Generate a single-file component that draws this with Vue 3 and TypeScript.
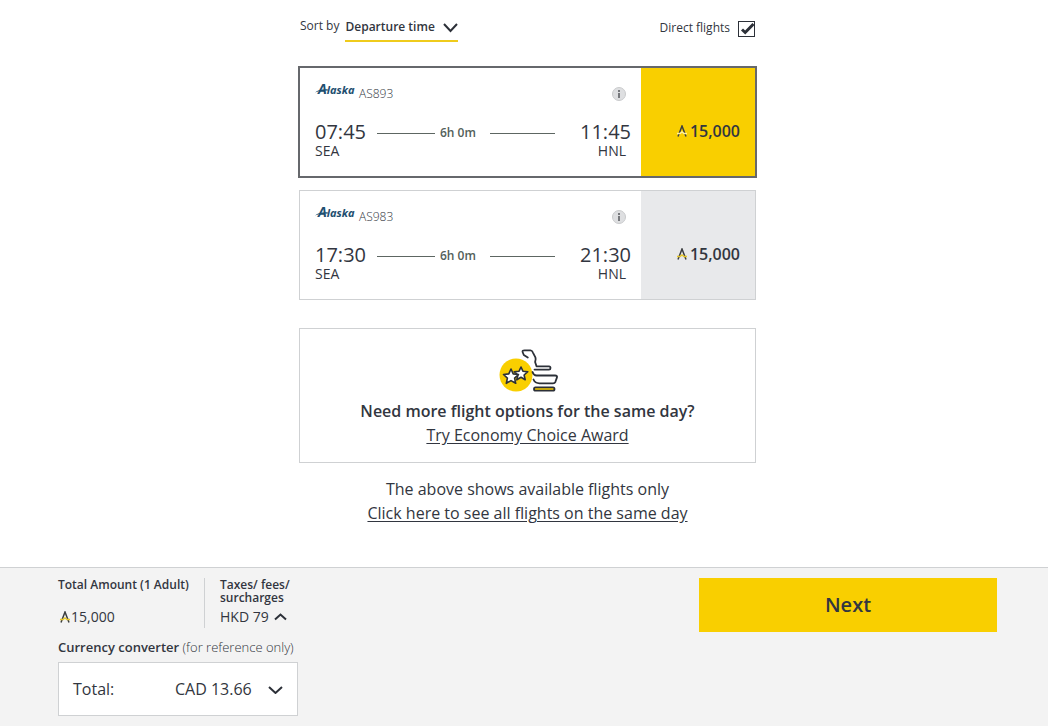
<script setup lang="ts">
import { ref } from 'vue'

interface Flight {
  code: string
  depart: string
  from: string
  arrive: string
  to: string
  duration: string
  points: string
}

const flights: Flight[] = [
  { code: 'AS893', depart: '07:45', from: 'SEA', arrive: '11:45', to: 'HNL', duration: '6h 0m', points: '15,000' },
  { code: 'AS983', depart: '17:30', from: 'SEA', arrive: '21:30', to: 'HNL', duration: '6h 0m', points: '15,000' },
]

const selected = ref('AS893')
const directOnly = ref(true)
const sortBy = ref('departure')
const currency = ref('CAD')
</script>

<template>
  <div class="page">
    <main class="results">
      <div class="toolbar">
        <div class="sort">
          <label for="sort">Sort by</label>
          <div class="sort-field">
            <select id="sort" v-model="sortBy">
              <option value="departure">Departure time</option>
            </select>
            <svg class="chevron" width="15" height="10" viewBox="0 0 15 10"><path d="M1 1l6.500 7L14 1" /></svg>
          </div>
        </div>
        <div class="direct">
          <label for="direct">Direct flights</label>
          <span class="tick">
            <input id="direct" v-model="directOnly" type="checkbox" />
            <svg v-if="directOnly" width="17" height="16" viewBox="0 0 17 16"><path d="M4 8.500l3.200 3L15.500 3" /></svg>
          </span>
        </div>
      </div>

      <article v-for="f in flights" :key="f.code" class="flight" :class="{ chosen: f.code === selected }">
        <div class="details">
          <div class="carrier">
            <svg class="airline" width="40" height="16" viewBox="0 0 40 16" role="img" aria-label="Alaska">
              <path d="M0 10.500C3 8 8 6.800 13 7.400L12.600 8.800C8 8 4 9 0 10.500z" />
              <text x="3" y="12"><tspan class="initial">A</tspan>laska</text>
            </svg>
            <span class="code">{{ f.code }}</span>
            <button class="info" type="button" aria-label="Flight information">
              <svg width="14" height="14" viewBox="0 0 14 14">
                <circle cx="7" cy="7" r="6.500" />
                <path d="M7 3v2M7 6v5" />
              </svg>
            </button>
          </div>
          <div class="route">
            <div class="stop">
              <span class="time">{{ f.depart }}</span>
              <span class="port">{{ f.from }}</span>
            </div>
            <div class="duration">
              <i class="rule"></i>
              <span>{{ f.duration }}</span>
              <i class="rule"></i>
            </div>
            <div class="stop arrival">
              <span class="time">{{ f.arrive }}</span>
              <span class="port">{{ f.to }}</span>
            </div>
          </div>
        </div>
        <button class="price" type="button" @click="selected = f.code">
          <svg class="miles" width="12" height="12" viewBox="0 0 12 12"><path class="legs" d="M2 11.500L6 1l4 10.500" /><path class="bar" d="M1 8.500h3L6 7l2 1.500h3" /></svg>
          <span>{{ f.points }}</span>
        </button>
      </article>

      <section class="promo">
        <svg width="60" height="44" viewBox="-1 0 60 44" fill="none">
          <circle cx="17" cy="26" r="16.500" fill="#f9cf00" />
          <g fill="#fff" stroke="#2c3038" stroke-width="1.600" stroke-linejoin="round">
            <path d="M22 18l1.900 4.200 4.900.5-3.700 3.300 1.100 4.800-4.200-2.500-4.200 2.500 1.100-4.800-3.700-3.300 4.900-.5z" />
            <path d="M12 20l2.200 4.900 5.300.6-3.900 3.600 1.100 5.200-4.700-2.700-4.700 2.700 1.100-5.200-3.900-3.600 5.300-.6z" />
          </g>
          <g stroke="#2c3038" stroke-width="1.800" stroke-linecap="round" stroke-linejoin="round">
            <path d="M28.800 8.500L24.800 6 23.600 3c-.4-1.200.4-1.700 1.900-1.700h6c1.200 0 1.800.7 2.300 2l2.600 5c.7 1.700.2 3-.3 4.700l1.400 4.300H50c2 0 2 3.300 0 3.300H35.500" />
            <path d="M33.500 23c.8 2.600 2 3.500 4 3.500h18.500c1.800 0 2.400.8 1.800 2.400l-1.400 3.900c-.5 1.200-1.200 1.500-2.400 1.500H40.500c-3 0-4.800-.8-6-3.800" />
            <path d="M36.500 38.300h17.500c2 0 2 3.400 0 3.400H36.500c-2 0-2-3.400 0-3.400z" fill="#f9cf00" />
          </g>
        </svg>
        <h2>Need more flight options for the same day?</h2>
        <a href="#choice">Try Economy Choice Award</a>
      </section>

      <div class="note">
        <p>The above shows available flights only</p>
        <a href="#all">Click here to see all flights on the same day</a>
      </div>
    </main>

    <footer class="summary">
      <div class="totals">
        <div class="amounts">
          <div class="amount">
            <h3>Total Amount (1 Adult)</h3>
            <p class="sum">
              <svg class="miles" width="12" height="12" viewBox="0 0 12 12"><path class="legs" d="M2 11.500L6 1l4 10.500" /><path class="bar" d="M1 8.500h3L6 7l2 1.500h3" /></svg>
              <span>15,000</span>
            </p>
          </div>
          <div class="taxes">
            <h3>Taxes/ fees/ surcharges</h3>
            <button class="sum" type="button">
              <span>HKD 79</span>
              <svg class="chevron" width="13" height="8" viewBox="0 0 13 8"><path d="M1 6.500l5.500-5 5.500 5" /></svg>
            </button>
          </div>
        </div>
        <p class="converter-title"><strong>Currency converter</strong> (for reference only)</p>
        <div class="converter">
          <label for="currency">Total:</label>
          <select id="currency" v-model="currency">
            <option value="CAD">CAD 13.66</option>
          </select>
          <svg class="chevron" width="15" height="9" viewBox="0 0 15 9"><path d="M1 2l6.500 6L14 2" /></svg>
        </div>
      </div>
      <button class="next" type="button">Next</button>
    </footer>
  </div>
</template>

<style>
body {
  margin: 0;
  background: #fff;
}
</style>

<style scoped>
.page {
  display: flex;
  flex-direction: column;
  min-height: 100vh;
  font-family: 'Open Sans', 'Noto Sans', sans-serif;
  font-size: 16px;
  line-height: 24px;
  color: #323640;
}
.page * {
  box-sizing: border-box;
}
h2,
h3,
p {
  margin: 0;
  font-size: inherit;
  font-weight: 600;
}
p {
  font-weight: 400;
}
a {
  color: inherit;
  text-underline-offset: 2px;
}
button,
select {
  appearance: none;
  margin: 0;
  padding: 0;
  border: 0;
  border-radius: 0;
  background: none;
  color: inherit;
  font: inherit;
  cursor: pointer;
}
.chevron {
  flex: none;
  fill: none;
  stroke: #2c3038;
  stroke-width: 2;
  pointer-events: none;
}
.results {
  flex: 1;
  width: 100%;
  max-width: 464px;
  margin: 0 auto;
  padding: 12px 0 0 7px;
}
.toolbar {
  display: flex;
  justify-content: space-between;
  height: 55px;
  font-size: 12px;
}
.sort {
  display: flex;
  gap: 6px;
  padding-left: 1px;
  line-height: 28px;
}
.sort-field {
  display: flex;
  align-items: center;
  width: 113px;
  height: 30px;
  border-bottom: 2px solid #efcb1c;
}
.sort-field select {
  flex: 1;
  height: 30px;
  margin-right: -15px;
  padding: 2px 15px 0 0;
  font-weight: 600;
}
.sort-field .chevron {
  margin-top: 4px;
}
.direct {
  display: flex;
  align-items: center;
  gap: 8px;
  height: 34px;
}
.direct label {
  line-height: 18px;
  padding-bottom: 2px;
}
.tick {
  display: grid;
  margin-right: 1px;
}
.tick input,
.tick svg {
  grid-area: 1 / 1;
}
.tick input {
  appearance: none;
  width: 17px;
  height: 16px;
  margin: 0;
  border: 1px solid #2c3038;
}
.tick svg {
  fill: none;
  stroke: #2c3038;
  stroke-width: 3;
  pointer-events: none;
}
.flight {
  display: flex;
  height: 110px;
  margin-bottom: 13px;
  border: 1px solid #cfd1d3;
}
.flight.chosen {
  border-color: #66686c;
  outline: 1px solid #66686c;
}
.details {
  flex: 1;
  padding: 14px 10px 0 15px;
}
.carrier {
  display: flex;
  align-items: center;
  gap: 4px;
  height: 24px;
}
.airline {
  flex: none;
  margin-bottom: 8px;
}
.airline path {
  fill: #1f4f70;
}
.airline text {
  fill: #1f4f70;
  font: italic 700 11px 'Noto Sans', sans-serif;
}
.airline .initial {
  font-size: 14px;
}
.code {
  font-size: 12px;
  font-weight: 300;
}
.info {
  height: 14px;
  margin-left: auto;
  margin-right: 5px;
  line-height: 0;
}
.info circle {
  fill: #dedfe1;
  stroke: #c9cacc;
}
.info path {
  fill: none;
  stroke: #77797d;
  stroke-width: 2;
}
.route {
  display: flex;
  justify-content: space-between;
}
.stop {
  display: flex;
  flex-direction: column;
  padding-top: 15px;
}
.time {
  font-size: 20px;
  line-height: 22px;
}
.port {
  font-size: 14px;
  line-height: 16px;
}
.arrival .port {
  padding-right: 5px;
  text-align: right;
}
.duration {
  display: flex;
  align-items: center;
  flex: 1;
  height: 24px;
  margin: 15px 25px 0 11px;
  font-size: 12px;
  font-weight: 600;
  color: #53605a;
}
.duration span {
  margin: 0 14px 0 5px;
}
.rule {
  flex: 1;
  height: 1px;
  background: #5d6662;
}
.rule:first-child {
  flex: 0 0 58px;
}
.price {
  display: flex;
  align-items: center;
  justify-content: flex-end;
  gap: 2px;
  width: 114px;
  padding: 18px 15px 0 0;
  background: #e8e9eb;
  font-weight: 600;
}
.chosen .price {
  background: #f9cf00;
}
.miles {
  flex: none;
  fill: none;
  stroke-width: 1.5;
}
.legs {
  stroke: #3b3e40;
}
.bar {
  stroke: #e6c72b;
}
.chosen .bar {
  stroke: #fff0a0;
}
.promo {
  display: flex;
  flex-direction: column;
  align-items: center;
  height: 135px;
  margin-top: 28px;
  padding-top: 20px;
  border: 1px solid #cfd1d3;
}
.promo svg {
  margin-bottom: 6px;
}
.note {
  padding: 14px 0 20px;
  text-align: center;
}
.summary {
  display: flex;
  justify-content: space-between;
  align-items: flex-start;
  padding: 10px 51px 10px 58px;
  border-top: 1px solid #cfd1d3;
  background: #f3f3f3;
}
.totals {
  width: 240px;
  font-size: 13px;
}
.amounts {
  display: flex;
  height: 50px;
}
.amount,
.taxes {
  display: flex;
  flex-direction: column;
  justify-content: space-between;
}
.amount {
  width: 147px;
  border-right: 1px solid #cfd1d3;
}
.taxes {
  flex: 1;
  padding-left: 15px;
}
h3 {
  font-size: 12px;
  line-height: 13px;
}
.sum {
  display: flex;
  align-items: center;
  gap: 5px;
  font-size: 14px;
  line-height: 22px;
}
.amount .sum {
  gap: 0;
  padding-left: 1px;
}
.converter-title {
  margin-top: 7px;
  font-weight: 300;
  white-space: nowrap;
}
.converter-title strong {
  font-weight: 600;
}
.converter {
  display: flex;
  align-items: center;
  height: 54px;
  margin-top: 3px;
  padding: 0 14px;
  border: 1px solid #cfd1d3;
  background: #fff;
  font-size: 16px;
}
.converter select {
  height: 52px;
  margin-left: auto;
  margin-right: -15px;
  padding-right: 31px;
}
.next {
  width: 298px;
  height: 54px;
  background: #f9cf00;
  font-size: 20px;
  font-weight: 600;
}
</style>
